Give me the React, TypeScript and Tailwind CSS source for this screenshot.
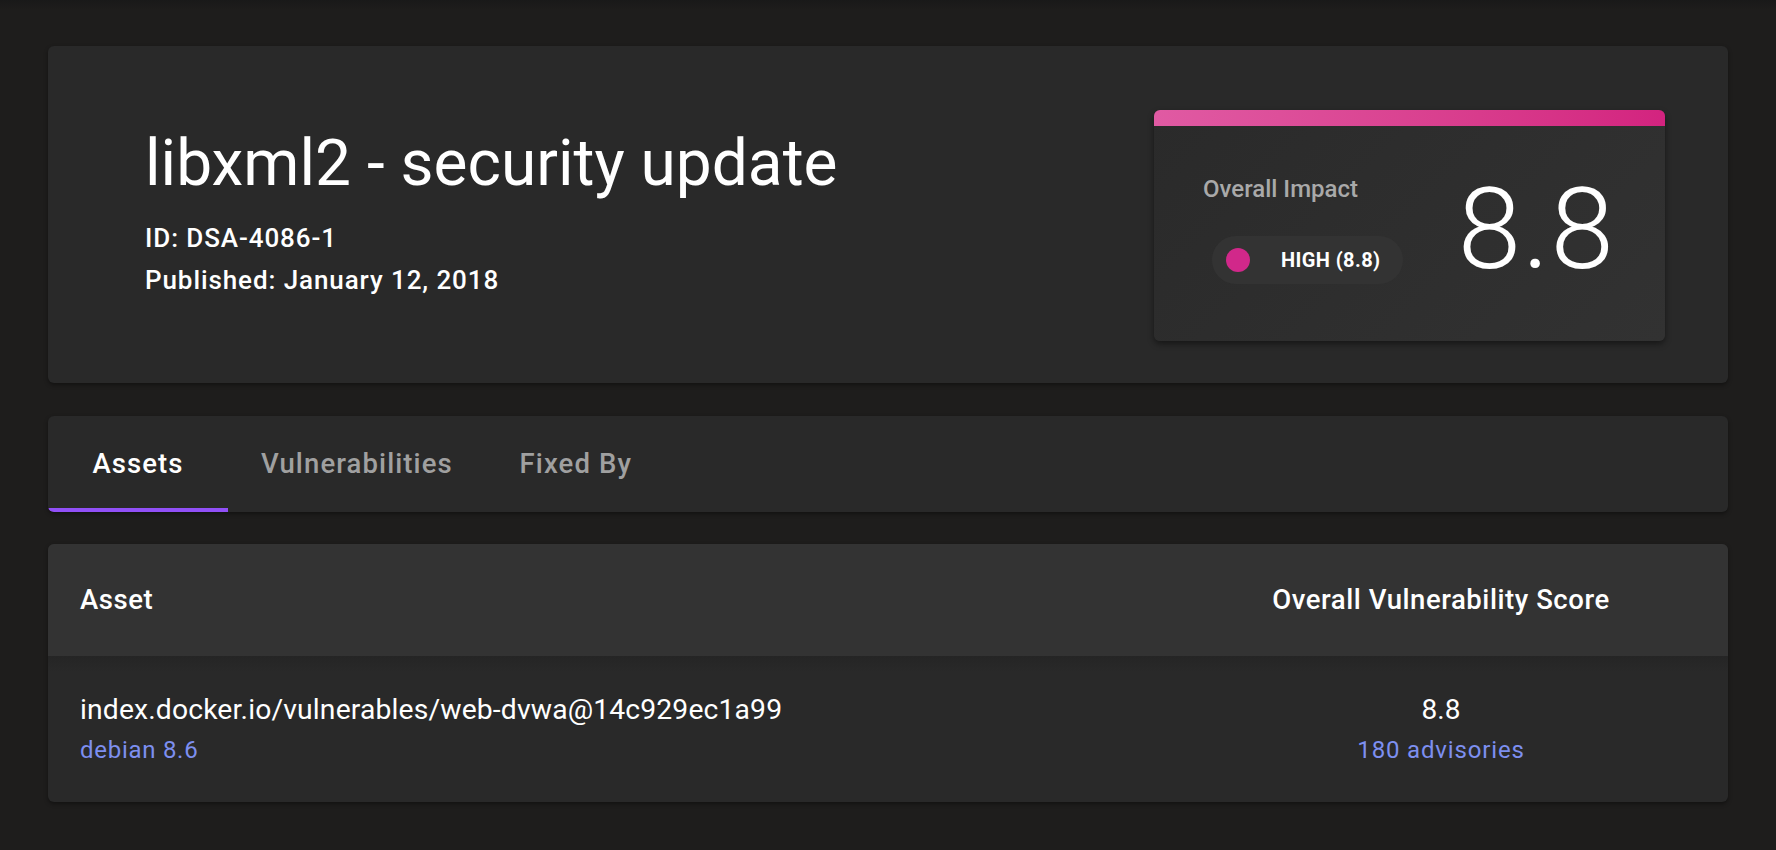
import React from "react";

export default function App() {
  return (
    <div className="min-h-screen bg-[#1e1d1c] px-[48px] pt-[46px] pb-[48px] font-['Roboto',sans-serif] text-white relative">
      <div className="absolute top-0 left-0 right-0 h-[10px] bg-gradient-to-b from-[#191919] to-[#1e1d1c]" />
      {/* Header card */}
      <div className="relative flex items-start justify-between rounded-[6px] bg-[#292929] pl-[97px] pr-[63px] pt-[64px] pb-[42px] shadow-[0_2px_4px_rgba(0,0,0,0.4)]">
        <div className="flex flex-col pt-[14px]">
          <h1 className="text-[64px] leading-[80px] font-normal">libxml2 - security update</h1>
          <div className="mt-[16px] text-[26px] leading-[36px] font-medium tracking-[0.035em]">ID: DSA-4086-1</div>
          <div className="mt-[6px] text-[26px] leading-[36px] font-medium tracking-[0.035em]">Published: January 12, 2018</div>
        </div>
        <div className="w-[511px] h-[231px] rounded-[6px] overflow-hidden bg-[linear-gradient(135deg,#2a2a2a_0%,#2e2e2e_50%,#323232_100%)] shadow-[0_3px_6px_rgba(0,0,0,0.45)] flex flex-col">
          <div className="h-[16px] bg-gradient-to-r from-[#e05aa3] to-[#d3237f]" />
          <div className="flex flex-1 items-center justify-between pl-[49px] pr-[50px] pb-[10px]">
            <div className="flex flex-col">
              <div className="text-[24px] leading-[30px] font-medium text-[#a9a9a9]">Overall Impact</div>
              <div className="mt-[32px] ml-[9px] flex h-[48px] w-[191px] items-center rounded-full bg-[#333333] pl-[14px]">
                <span className="h-[24px] w-[24px] rounded-full bg-[#d1288a]" />
                <span className="ml-[31px] text-[20px] font-bold tracking-[0.02em]">HIGH (8.8)</span>
              </div>
            </div>
            <div className="text-[114px] leading-none font-light tracking-[0.01em]">8.8</div>
          </div>
        </div>
      </div>

      {/* Tabs */}
      <div className="mt-[33px] flex h-[96px] rounded-[6px] bg-[#292929] shadow-[0_2px_4px_rgba(0,0,0,0.4)] overflow-hidden">
        <div className="relative flex min-w-[180px] items-center justify-center px-[33px] text-[27.5px] font-medium tracking-[0.04em] text-white">
          Assets
          <div className="absolute bottom-0 left-0 right-0 h-[4px] bg-[#9150f7]" />
        </div>
        <div className="flex min-w-[180px] items-center justify-center px-[33px] text-[27.5px] font-medium tracking-[0.04em] text-[#a0a0a0]">Vulnerabilities</div>
        <div className="flex min-w-[180px] items-center justify-center px-[31px] text-[27.5px] font-medium tracking-[0.04em] text-[#a0a0a0]">Fixed By</div>
      </div>

      {/* Table */}
      <div className="mt-[32px] rounded-[6px] bg-[#292929] shadow-[0_2px_4px_rgba(0,0,0,0.4)] overflow-hidden">
        <div className="flex h-[112px] items-center bg-[#333333] pl-[32px] text-[27.5px] font-medium tracking-[0.02em]">
          <div className="flex-1">Asset</div>
          <div className="w-[400px] mr-[87px] text-center">Overall Vulnerability Score</div>
        </div>
        <div className="h-[16px] bg-gradient-to-b from-[#252525] to-[#292929]" />
        <div className="flex items-start pl-[32px] pt-[20px] pb-[36px]">
          <div className="flex-1">
            <div className="text-[28.3px] leading-[36px] tracking-[0.005em]">index.docker.io/vulnerables/web-dvwa@14c929ec1a99</div>
            <div className="mt-[6px] text-[24px] leading-[32px] tracking-[0.03em] text-[#7d8ff0]">debian 8.6</div>
          </div>
          <div className="w-[400px] mr-[87px] text-center">
            <div className="text-[28px] leading-[36px]">8.8</div>
            <div className="mt-[6px] text-[24px] leading-[32px] tracking-[0.035em] text-[#7d8ff0]">180 advisories</div>
          </div>
        </div>
      </div>
    </div>
  );
}
